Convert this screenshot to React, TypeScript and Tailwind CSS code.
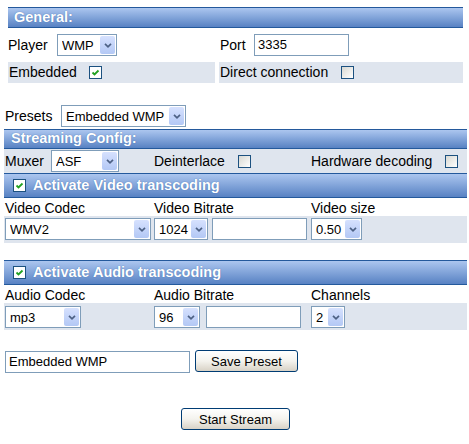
import clsx from "clsx";
import type { ReactNode } from "react";

function Select({ value, w }: { value: string; w: string }) {
  return (
    <div className={clsx("flex h-[22px] items-center border border-[#7f9db9] bg-white pl-[4px] pr-[1px]", w)}>
      <span className="min-w-0 flex-1 overflow-hidden whitespace-nowrap text-[13px] leading-none text-black">{value}</span>
      <span className="flex h-[18px] w-[15px] shrink-0 items-center justify-center rounded-[2px] bg-gradient-to-b from-[#d6e1fe] to-[#b3c8f5]">
        <svg width="8" height="5" viewBox="0 0 8 5">
          <path d="M1 0.8 L4 3.8 L7 0.8" stroke="#4d6185" strokeWidth="1.7" fill="none" />
        </svg>
      </span>
    </div>
  );
}

function Input({ value, w }: { value?: string; w: string }) {
  return (
    <div className={clsx("flex h-[22px] items-center whitespace-nowrap border border-[#7f9db9] bg-white pl-[3px] text-[13px] text-black", w)}>
      {value}
    </div>
  );
}

function Check({ on }: { on?: boolean }) {
  return (
    <span
      className={clsx(
        "flex h-[13px] w-[13px] shrink-0 items-center justify-center border border-[#1c5180]",
        on ? "bg-white" : "bg-gradient-to-br from-[#d8d8d2] to-white"
      )}
    >
      {on && (
        <svg width="9" height="9" viewBox="0 0 9 9">
          <path d="M1.5 4.5 L3.5 6.5 L7.5 2.5" stroke="#21a121" strokeWidth="1.8" fill="none" />
        </svg>
      )}
    </span>
  );
}

function Bar({ children, className }: { children: ReactNode; className?: string }) {
  return (
    <div
      className={clsx(
        "flex items-center whitespace-nowrap border-y border-[#24599c] bg-gradient-to-b from-[#acc6ef] to-[#5882c3] text-[14.5px] font-bold text-white [text-shadow:0_0_1px_#3a67a8]",
        className
      )}
    >
      {children}
    </div>
  );
}

function Button({ label, w }: { label: string; w: string }) {
  return (
    <button
      type="button"
      className={clsx(
        "h-[22px] whitespace-nowrap rounded-[3px] border border-[#003c74] bg-gradient-to-b from-white via-[#f4f3ee] to-[#d8d2c6] text-[13px] leading-none text-black",
        w
      )}
    >
      {label}
    </button>
  );
}

export default function App() {
  return (
    <div className="h-[444px] w-[469px] bg-white font-['Liberation_Sans',Arial,sans-serif] text-[14px] text-black">
      {/* General */}
      <div className="ml-[8px] w-[455px] pt-[7px]">
        <Bar className="h-[21px] pl-[6px]">General:</Bar>
        <div className="flex items-center py-[6px]">
          <div className="flex w-[211px] items-center">
            <span className="w-[49px]">Player</span>
            <Select value="WMP" w="w-[60px]" />
          </div>
          <div className="flex items-center pl-[1px]">
            <span className="w-[34px]">Port</span>
            <Input value="3335" w="w-[95px]" />
          </div>
        </div>
        <div className="flex h-[21px] gap-[4px]">
          <div className="flex w-[207px] items-center bg-[#dfe5ee] pl-[1px]">
            <span className="mr-[12px]">Embedded</span>
            <Check on />
          </div>
          <div className="flex flex-1 items-center bg-[#dfe5ee] pl-[1px]">
            <span className="mr-[13px]">Direct connection</span>
            <Check />
          </div>
        </div>
      </div>

      {/* Presets */}
      <div className="ml-[5px] mt-[22px] flex items-center">
        <span className="w-[56px]">Presets</span>
        <Select value="Embedded WMP" w="w-[125px]" />
      </div>

      {/* Streaming config */}
      <div className="ml-[4px] mt-[2px] w-[463px]">
        <Bar className="h-[20px] pl-[7px]">Streaming Config:</Bar>
        <div className="grid h-[24px] grid-cols-[149px_156px_1fr] items-center bg-[#dfe5ee]">
          <div className="flex items-center pl-[1px]">
            <span className="w-[46px]">Muxer</span>
            <Select value="ASF" w="w-[68px]" />
          </div>
          <div className="flex items-center pl-[1px]">
            <span className="mr-[13px]">Deinterlace</span>
            <Check />
          </div>
          <div className="flex items-center pl-[2px]">
            <span className="mr-[13px]">Hardware decoding</span>
            <Check />
          </div>
        </div>

        <Bar className="h-[25px] pl-[9px]">
          <Check on />
          <span className="ml-[7px]">Activate Video transcoding</span>
        </Bar>
        <div className="grid h-[18px] grid-cols-[149px_156px_1fr] items-center">
          <span className="pl-[1px]">Video Codec</span>
          <span className="pl-[1px]">Video Bitrate</span>
          <span className="pl-[2px]">Video size</span>
        </div>
        <div className="grid h-[27px] grid-cols-[149px_156px_1fr] items-start bg-[#dfe5ee] pt-[2px]">
          <div className="pl-[1px]">
            <Select value="WMV2" w="w-[146px]" />
          </div>
          <div className="flex gap-[4px] pl-[1px]">
            <Select value="1024" w="w-[54px]" />
            <Input w="w-[95px]" />
          </div>
          <div className="pl-[2px]">
            <Select value="0.50" w="w-[51px]" />
          </div>
        </div>

        <Bar className="mt-[17px] h-[25px] pl-[9px]">
          <Check on />
          <span className="ml-[7px]">Activate Audio transcoding</span>
        </Bar>
        <div className="grid h-[18px] grid-cols-[149px_156px_1fr] items-center">
          <span className="pl-[1px]">Audio Codec</span>
          <span className="pl-[1px]">Audio Bitrate</span>
          <span className="pl-[2px]">Channels</span>
        </div>
        <div className="grid h-[27px] grid-cols-[149px_156px_1fr] items-start bg-[#dfe5ee] pt-[3px]">
          <div className="pl-[1px]">
            <Select value="mp3" w="w-[76px]" />
          </div>
          <div className="flex gap-[6px] pl-[1px]">
            <Select value="96" w="w-[46px]" />
            <Input w="w-[95px]" />
          </div>
          <div className="pl-[2px]">
            <Select value="2" w="w-[34px]" />
          </div>
        </div>
      </div>

      {/* Save preset */}
      <div className="ml-[5px] mt-[20px] flex items-start gap-[5px]">
        <div className="pt-[1px]">
          <Input value="Embedded WMP" w="w-[185px]" />
        </div>
        <Button label="Save Preset" w="w-[103px]" />
      </div>

      <div className="mt-[35px] flex justify-center pl-[2px]">
        <Button label="Start Stream" w="w-[109px]" />
      </div>
    </div>
  );
}
